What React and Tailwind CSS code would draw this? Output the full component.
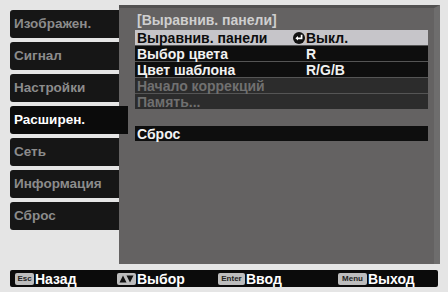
import React from 'react';

const tabs = ['Изображен.', 'Сигнал', 'Настройки', 'Расширен.', 'Сеть', 'Информация', 'Сброс'];

const rows = [
  { label: 'Выравнив. панели', value: 'Выкл.', state: 'active', icon: true },
  { label: 'Выбор цвета', value: 'R', state: 'normal' },
  { label: 'Цвет шаблона', value: 'R/G/B', state: 'normal' },
  { label: 'Начало коррекций', value: '', state: 'disabled' },
  { label: 'Память...', value: '', state: 'disabled' },
];

const EnterMark = () => (
  <svg width="12" height="12" viewBox="0 0 12 12" className="mr-[1px]">
    <circle cx="6" cy="6" r="6" fill="#111" />
    <path d="M8.6 2.8v3.5H4.2" stroke="#fff" strokeWidth="1.7" fill="none" />
    <path d="M2.4 6.3l2.6-2.2v4.4z" fill="#fff" />
  </svg>
);

const Key = ({ children, w }) => (
  <span
    className={`flex items-center justify-center h-[12px] ${w} bg-[#bdbdbd] rounded-[2px] text-[#222] text-[8px] leading-none font-bold mr-[1px]`}
  >
    {children}
  </span>
);

const Row = ({ row }) => {
  const styles = {
    active: 'bg-[#c6c5c9] text-[#0d0d0d]',
    normal: 'bg-[#0e0e0e] text-[#f2f2f2]',
    disabled: 'bg-[#2c2c2c] text-[#707070]',
  };
  return (
    <div className={`flex items-center h-[15px] pl-[2px] ${styles[row.state]}`}>
      <span className="w-[156px]">{row.label}</span>
      {row.icon && <EnterMark />}
      <span className={row.icon ? '' : 'pl-[13px]'}>{row.value}</span>
    </div>
  );
};

export default function App() {
  return (
    <div
      className="w-[448px] h-[292px] bg-[#e5e5e5] overflow-hidden"
      style={{ fontFamily: '"Liberation Sans", Arial, sans-serif' }}
    >
      <div className="flex pt-[5px]">
        {/* side tabs */}
        <div className="w-[109px] ml-[10px] pt-[5px] flex flex-col gap-[4px] shrink-0">
          {tabs.map((t, i) => (
            <div
              key={t}
              className={`h-[28px] flex items-center pl-[4px] rounded-l-[3px] text-[13.5px] font-bold ${
                i === 3
                  ? 'w-[118px] bg-[#0b0b0b] text-white relative z-10'
                  : 'bg-[#161616] text-[#8c8c8c]'
              }`}
            >
              {t}
            </div>
          ))}
        </div>

        {/* main panel */}
        <div className="w-[321px] h-[259px] bg-[#646262] border-t-[3px] border-t-[#525151] border-r-[6px] border-r-[#6e6d6d] pl-[16px] pr-[6px] text-[14px] font-bold leading-none">
          <div className="h-[22px] flex items-center pl-[2px] pt-[1px] text-[#cfcfcf]">[Выравнив. панели]</div>
          <div className="flex flex-col gap-[1px] bg-[#555]">
            {rows.map((r) => (
              <Row key={r.label} row={r} />
            ))}
          </div>
          <div className="mt-[17px] h-[15px] bg-[#0e0e0e] text-[#f2f2f2] flex items-center pl-[2px]">Сброс</div>
        </div>
      </div>

      {/* footer */}
      <div className="mt-[6px] mx-[10px] h-[17px] bg-[#0b0b0b] rounded-[2px] flex items-center text-white text-[14px] font-bold leading-none pl-[5px]">
        <div className="flex items-center w-[102px]">
          <Key w="w-[19px]">Esc</Key>
          <span>Назад</span>
        </div>
        <div className="flex items-center w-[101px]">
          <Key w="w-[19px]">
            <svg width="15" height="8" viewBox="0 0 15 8">
              <path d="M0.5 7.5L4 0.5L7.5 7.5z" fill="#111" />
              <path d="M7.5 0.5L14.5 0.5L11 7.5z" fill="#111" />
            </svg>
          </Key>
          <span>Выбор</span>
        </div>
        <div className="flex items-center w-[120px]">
          <Key w="w-[27px]">Enter</Key>
          <span>Ввод</span>
        </div>
        <div className="flex items-center">
          <Key w="w-[29px]">Menu</Key>
          <span>Выход</span>
        </div>
      </div>
    </div>
  );
}
